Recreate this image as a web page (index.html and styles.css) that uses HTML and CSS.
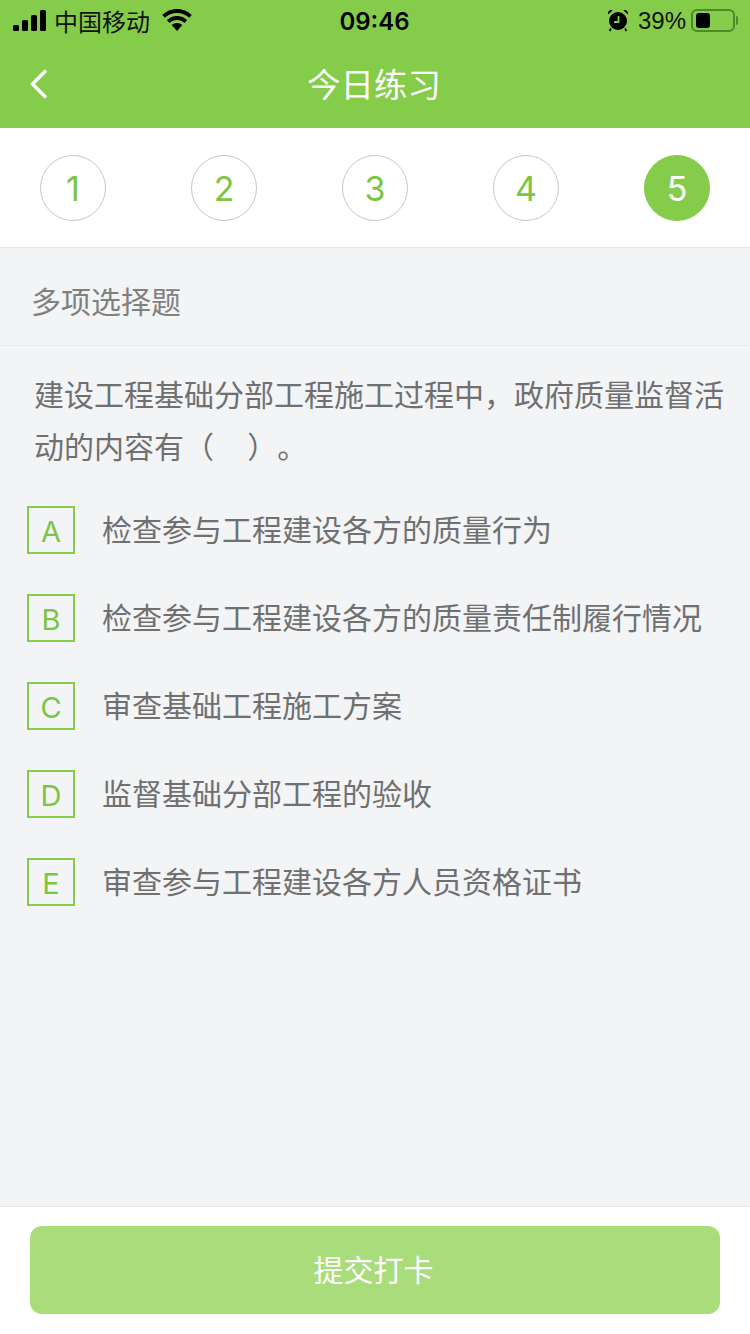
FILE: index.html
```html
<!DOCTYPE html>
<html lang="zh-CN">
<head>
    <meta charset="UTF-8">
    <meta name="viewport" content="width=device-width, initial-scale=1.0">
    <title>今日练习</title>
    <link rel="stylesheet" href="styles.css">
</head>
<body>
<div class="page">
    <header class="top">
        <div class="status">
            <div class="status-side">
                <svg class="signal" width="34" height="21" viewBox="0 0 34 21">
                    <rect x="0" y="15" width="6" height="6" rx="1.500"/>
                    <rect x="9" y="10" width="6" height="11" rx="1.500"/>
                    <rect x="18" y="5" width="6" height="16" rx="1.500"/>
                    <rect x="27" y="0" width="6" height="21" rx="1.500"/>
                </svg>
                <span class="carrier">中国移动</span>
                <svg class="wifi" width="30" height="22" viewBox="0 0 30 22">
                    <path d="M15 4c4.700 0 9 1.800 12.200 4.800l2.500-2.700C25.900 2.300 20.700 0 15 0S4.100 2.300.3 6.100l2.500 2.700C6 5.800 10.300 4 15 4z"/>
                    <path d="M15 11c2.900 0 5.500 1.100 7.500 2.900l2.600-2.800C22.500 8.600 18.900 7 15 7S7.500 8.600 4.900 11.100l2.600 2.800c2-1.800 4.600-2.900 7.500-2.900z"/>
                    <path d="M15 14c-2 0-3.900.8-5.300 2.100L15 22l5.300-5.900C18.900 14.800 17 14 15 14z"/>
                </svg>
            </div>
            <span class="clock">09:46</span>
            <div class="status-side status-right">
                <svg class="alarm" width="22" height="24" viewBox="0 0 22 24">
                    <circle cx="11" cy="13" r="9"/>
                    <path d="M1 6.500 5.500 2.500C3.500 1.200.5 3 1 6.500zM21 6.500 16.500 2.500c2-1.300 5 .5 4.500 4z"/>
                    <path d="M4 20.500 2.500 23M18 20.500 19.500 23" stroke="#000" stroke-width="1.800" fill="none"/>
                    <path d="M11.500 8v6H7" stroke="#86cc4b" stroke-width="1.800" fill="none"/>
                </svg>
                <span class="percent">39%</span>
                <div class="battery"><div class="battery-level"></div></div>
                <div class="battery-tip"></div>
            </div>
        </div>
        <nav class="nav">
            <svg class="back" width="20" height="32" viewBox="0 0 20 32">
                <path d="M17 2.500 3.500 16 17 29.500" fill="none" stroke="#fff" stroke-width="3.400"/>
            </svg>
            <h1 class="title">今日练习</h1>
        </nav>
    </header>

    <div class="steps">
        <div class="step">1</div>
        <div class="step">2</div>
        <div class="step">3</div>
        <div class="step">4</div>
        <div class="step step-on">5</div>
    </div>

    <main class="content">
        <div class="type">多项选择题</div>
        <p class="question">建设工程基础分部工程施工过程中，政府质量监督活动的内容有（ &nbsp;&nbsp; ）。</p>
        <ul class="options">
            <li class="option"><span class="letter">A</span><span class="option-text">检查参与工程建设各方的质量行为</span></li>
            <li class="option"><span class="letter">B</span><span class="option-text">检查参与工程建设各方的质量责任制履行情况</span></li>
            <li class="option"><span class="letter">C</span><span class="option-text">审查基础工程施工方案</span></li>
            <li class="option"><span class="letter">D</span><span class="option-text">监督基础分部工程的验收</span></li>
            <li class="option"><span class="letter">E</span><span class="option-text">审查参与工程建设各方人员资格证书</span></li>
        </ul>
    </main>

    <footer class="bottom">
        <button type="button" class="submit">提交打卡</button>
    </footer>
</div>
</body>
</html>
```

FILE: styles.css
```css
* {
    box-sizing: border-box;
}

html, body {
    margin: 0;
    padding: 0;
    background: #f3f4f6;
    font-family: "Liberation Sans", "Noto Sans CJK SC", sans-serif;
    text-spacing-trim: space-all;
}

.page {
    display: flex;
    flex-direction: column;
    width: 750px;
    height: 1334px;
    overflow: hidden;
}

.top {
    height: 128px;
    background: #86cc4b;
}

.status {
    display: flex;
    align-items: center;
    justify-content: space-between;
    height: 40px;
    padding: 0 12px 0 13px;
    color: #000;
}

.status-side {
    display: flex;
    align-items: center;
    width: 260px;
}

.status-right {
    justify-content: flex-end;
}

.signal {
    margin-right: 7px;
}

.wifi {
    margin-left: 12px;
}

.carrier {
    font-size: 24px;
    color: #111;
}

.clock {
    padding: 2px 2px 0 0;
    font-family: Inter, "Liberation Sans", sans-serif;
    font-size: 24px;
    font-weight: 600;
}

.alarm {
    margin-right: 9px;
}

.percent {
    font-size: 24px;
    margin-right: 5px;
    color: #111;
    padding-top: 2px;
}

.battery {
    width: 44px;
    height: 23px;
    padding: 2px 3px;
    border: 2px solid #4f8a2a;
    border-radius: 6px;
}

.battery-level {
    width: 14px;
    height: 15px;
    background: #000;
    border-radius: 3px;
}

.battery-tip {
    width: 2px;
    height: 9px;
    margin-left: 1px;
    background: #4f8a2a;
    border-radius: 0 2px 2px 0;
}

.nav {
    position: relative;
    height: 88px;
    display: flex;
    align-items: center;
    justify-content: center;
    padding: 0 2px 3px 0;
}

.back {
    position: absolute;
    left: 29px;
    top: 28px;
}

.title {
    margin: 0;
    font-size: 33.500px;
    font-weight: 400;
    color: #fff;
}

.steps {
    display: flex;
    justify-content: space-between;
    height: 120px;
    padding: 27px 40px 0;
    background: #fff;
    border-bottom: 1px solid #e6e6e6;
}

.step {
    display: flex;
    align-items: center;
    justify-content: center;
    width: 66px;
    height: 66px;
    font-family: Inter, "Liberation Sans", sans-serif;
    font-size: 34px;
    font-weight: 400;
    color: #7cc544;
    border: 1px solid #c8c8c8;
    border-radius: 50%;
}

.step-on {
    color: #fff;
    background: #86cc4b;
    border-color: #86cc4b;
}

.content {
    flex: 1;
}

.type {
    height: 98px;
    padding: 0 31px;
    line-height: 110px;
    font-size: 30px;
    color: #808080;
    border-bottom: 1px solid #e8e9eb;
}

.question {
    margin: 0;
    padding: 24px 15px 0 34px;
    font-size: 30px;
    line-height: 52px;
    color: #707070;
}

.options {
    list-style: none;
    margin: 0;
    padding: 32px 0 0 27px;
}

.option {
    display: flex;
    align-items: center;
    gap: 27px;
    height: 48px;
    margin-bottom: 40px;
    font-size: 30px;
    color: #707070;
}

.option-text {
    padding-bottom: 4px;
}

.letter {
    display: flex;
    align-items: center;
    justify-content: center;
    flex: none;
    width: 48px;
    height: 48px;
    padding-top: 2px;
    font-family: Inter, "Liberation Sans", sans-serif;
    font-size: 29px;
    font-weight: 400;
    color: #7cc544;
    border: 2px solid #86cc4b;
}

.bottom {
    height: 128px;
    padding: 19px 30px 0;
    background: #fff;
    border-top: 1px solid #e6e6e6;
}

.submit {
    display: block;
    width: 100%;
    height: 88px;
    padding: 0 3px 4px 0;
    font-family: inherit;
    font-size: 30px;
    color: #fff;
    background: #a9dc7a;
    border: 0;
    border-radius: 12px;
}
```
